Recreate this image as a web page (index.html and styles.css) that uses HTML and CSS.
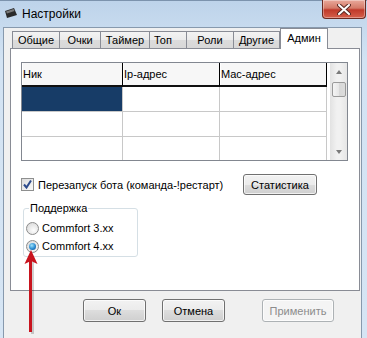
FILE: index.html
```html
<!DOCTYPE html>
<html lang="ru">

<head>
    <meta charset="UTF-8">
    <meta name="viewport" content="width=device-width, initial-scale=1.0">
    <title>Настройки</title>
    <link rel="stylesheet" href="styles.css">
</head>

<body>
    <div class="window">
        <div class="titlebar">
            <svg class="app-icon" width="14" height="11" viewBox="0 0 14 11">
                <polygon points="1,3 10,0 13,7 3,10" fill="#2a2a2a" />
                <polygon points="2,3.5 9.5,1 10.5,3 3,5.5" fill="#7a7a7a" />
            </svg>
            <span class="title">Настройки</span>
            <div class="close-btn">
                <svg width="14" height="11" viewBox="0 0 14 11">
                    <path d="M2 1 L12 10 M12 1 L2 10" stroke="#5a2a24" stroke-width="4" stroke-linecap="round" />
                    <path d="M2 1 L12 10 M12 1 L2 10" stroke="#fff" stroke-width="2" stroke-linecap="round" />
                </svg>
            </div>
        </div>

        <div class="client">
            <div class="tabs">
                <div class="tab tab-obshie">Общие</div>
                <div class="tab tab-ochki">Очки</div>
                <div class="tab tab-timer">Таймер</div>
                <div class="tab tab-top">Топ</div>
                <div class="tab tab-roli">Роли</div>
                <div class="tab tab-drugie">Другие</div>
                <div class="tab tab-admin active">Админ</div>
            </div>

            <div class="panel">
                <div class="grid">
                    <div class="grid-view">
                        <div class="gh">Ник</div>
                        <div class="gh">Ip-адрес</div>
                        <div class="gh">Mac-адрес</div>
                        <div class="gc selected"></div>
                        <div class="gc"></div>
                        <div class="gc"></div>
                        <div class="gc"></div>
                        <div class="gc"></div>
                        <div class="gc"></div>
                        <div class="gc"></div>
                        <div class="gc"></div>
                        <div class="gc"></div>
                    </div>
                    <div class="scrollbar">
                        <div class="sb-btn"><span class="arr-up"></span></div>
                        <div class="sb-thumb"></div>
                        <div class="sb-track"></div>
                        <div class="sb-btn"><span class="arr-down"></span></div>
                    </div>
                </div>

                <div class="check-row">
                    <label class="check">
                        <span class="checkbox">
                            <svg width="11" height="11" viewBox="0 0 11 11">
                                <path d="M2 5.5 L4.5 8.5 L9 1.5" fill="none" stroke="#2c4a8c" stroke-width="2" />
                            </svg>
                        </span>
                        Перезапуск бота (команда-!рестарт)
                    </label>
                    <button class="btn btn-stats">Статистика</button>
                </div>

                <div class="group">
                    <div class="group-title">Поддержка</div>
                    <div class="radio-row"><span class="radio"></span>Commfort 3.xx</div>
                    <div class="radio-row"><span class="radio checked"></span>Commfort 4.xx</div>
                </div>
            </div>

            <div class="btn-row">
                <button class="btn btn-ok">Ок</button>
                <button class="btn btn-cancel">Отмена</button>
                <button class="btn btn-apply" disabled>Применить</button>
            </div>
        </div>

        <!-- red pointer drawn over the dialog -->
        <svg class="arrow" width="367" height="338" viewBox="0 0 367 338">
            <line x1="32.5" y1="262" x2="32.5" y2="334" stroke="rgba(0,0,0,0.18)" stroke-width="3" />
            <line x1="30.5" y1="260" x2="30.5" y2="332" stroke="#c8141e" stroke-width="3" />
            <polygon points="31,250 24.5,264 31,261 37.5,264" fill="#c8141e" />
        </svg>
    </div>
</body>

</html>
```

FILE: styles.css
```css
* {
    box-sizing: border-box;
}

body {
    margin: 0;
    font-family: "Liberation Sans", Arial, sans-serif;
    font-size: 11px;
    font-weight: 400;
    color: #000;
}

.window {
    position: relative;
    width: 367px;
    height: 338px;
    overflow: hidden;
    display: flex;
    flex-direction: column;
    background: linear-gradient(#bdd3ea, #d3e3f3 60px, #d6e5f4);
}

/* title bar */

.titlebar {
    height: 27px;
    display: flex;
    align-items: flex-start;
    border-top: 1px solid #7c93ad;
}

.app-icon {
    margin: 7px 0 0 4px;
}

.title {
    margin: 6px 0 0 4px;
    font-size: 12px;
    line-height: 15px;
}

.close-btn {
    margin-left: auto;
    margin-right: 1px;
    margin-top: -1px;
    width: 44px;
    height: 19px;
    display: flex;
    align-items: center;
    justify-content: center;
    border: 1px solid #6b2a22;
    border-top: none;
    border-radius: 0 0 4px 4px;
    background: linear-gradient(#e9a99b, #d47a68 45%, #c0392a 55%, #d5604c);
    box-shadow: inset 0 0 0 1px rgba(255, 255, 255, 0.35);
}

/* client area */

.client {
    flex: 1;
    margin: 0 5px 0 3px;
    background: #f0f0f0;
    border: 1px solid #8799ad;
    border-bottom: none;
}

.tabs {
    display: flex;
    align-items: flex-end;
    height: 20px;
    padding-left: 8px;
}

.tab {
    height: 17px;
    line-height: 16px;
    text-align: center;
    border: 1px solid #898c95;
    border-bottom: none;
    margin-right: -1px;
    background: linear-gradient(#f3f3f3, #ebebeb 50%, #dcdcdc 50%, #d8d8d8);
}

.tab-obshie { width: 48px; }
.tab-ochki { width: 42px; }
.tab-timer { width: 50px; }
.tab-top { width: 38px; text-align: left; padding-left: 4px; }
.tab-roli { width: 48px; }
.tab-drugie { width: 47px; }

.tab.active {
    position: relative;
    z-index: 1;
    width: 48px;
    height: 21px;
    line-height: 19px;
    margin-bottom: -1px;
    margin-left: 1px;
    background: #fff;
}

.panel {
    width: 350px;
    height: 243px;
    margin-left: 6px;
    padding: 13px 0 0 10px;
    background: #fff;
    border: 1px solid #898c95;
}

/* grid */

.grid {
    width: 327px;
    height: 99px;
    display: flex;
    border: 1px solid #828790;
    background: #fff;
}

.grid-view {
    width: 308px;
    height: 97px;
    overflow: hidden;
    display: grid;
    grid-template-columns: 101px 97px 107px;
    grid-template-rows: 24px 25px 25px 25px;
    align-content: start;
}

.gh {
    padding-left: 1px;
    line-height: 22px;
    background: #f7f7f7;
    border-right: 1px solid #000;
    border-bottom: 2px solid #111;
    box-shadow: inset 1px 0 #fff;
}

.gc {
    border-right: 1px solid #c8c8c8;
    border-bottom: 1px solid #c8c8c8;
}

.gc.selected {
    background: #173c67;
}

.scrollbar {
    width: 17px;
    display: flex;
    flex-direction: column;
    background: linear-gradient(90deg, #e2e2e2, #f1f1f1 40%, #f1f1f1 60%, #e6e6e6);
}

.sb-btn {
    height: 17px;
    display: flex;
    align-items: center;
    justify-content: center;
}

.sb-track {
    flex: 1;
}

.arr-up,
.arr-down {
    width: 0;
    height: 0;
    border-left: 3.5px solid transparent;
    border-right: 3.5px solid transparent;
}

.arr-up {
    border-bottom: 4px solid #7a7a7a;
}

.arr-down {
    border-top: 4px solid #7a7a7a;
}

.sb-thumb {
    height: 15px;
    margin: 2px 1px 0 2px;
    border: 1px solid #9a9a9a;
    border-radius: 2px;
    background: linear-gradient(90deg, #f4f4f4, #e6e6e6 50%, #d8d8d8 50%, #dcdcdc);
}

/* checkbox row */

.check-row {
    display: flex;
    align-items: center;
    height: 21px;
    margin-top: 13px;
}

.check {
    width: 222px;
    display: flex;
    align-items: center;
    gap: 4px;
}

.checkbox {
    width: 13px;
    height: 13px;
    display: flex;
    align-items: center;
    justify-content: center;
    border: 1px solid #8e8f8f;
    background: linear-gradient(135deg, #dcdcdc, #fafafa);
}

.btn {
    font-family: inherit;
    font-size: 11px;
    font-weight: 400;
    color: #000;
    padding: 0;
    border: 1px solid #707070;
    border-radius: 3px;
    background: linear-gradient(#f2f2f2, #ebebeb 50%, #dddddd 50%, #cfcfcf);
    box-shadow: inset 0 0 0 1px rgba(255, 255, 255, 0.7);
}

.btn:disabled {
    color: #8c8c8c;
    border-color: #adb2b5;
    background: #f4f4f4;
}

.btn-stats {
    width: 74px;
    height: 21px;
}

/* group box */

.group {
    width: 115px;
    margin: 13px 0 0 2px;
    padding: 0 0 1px 1px;
    border: 1px solid #d5dfe5;
    border-radius: 3px;
}

.group-title {
    width: fit-content;
    margin: -7px 0 0 4px;
    padding: 0 1px;
    line-height: 13px;
    background: #fff;
}

.radio-row {
    height: 18px;
    display: flex;
    align-items: center;
    gap: 3px;
    padding-left: 1px;
}

.group-title + .radio-row {
    margin-top: 4px;
}

.radio {
    width: 13px;
    height: 13px;
    border-radius: 50%;
    border: 1px solid #8b8b8b;
    background: radial-gradient(circle at 60% 65%, #fdfdfd, #d4d4d4);
    display: flex;
    align-items: center;
    justify-content: center;
}

.radio.checked::after {
    content: "";
    width: 7px;
    height: 7px;
    border-radius: 50%;
    background: radial-gradient(circle at 40% 35%, #9ee3fb, #2a8ad0 55%, #0b3f7c);
}

/* bottom buttons */

.btn-row {
    display: flex;
    gap: 16px;
    margin-top: 8px;
    padding-left: 79px;
}

.btn-ok,
.btn-cancel {
    width: 63px;
    height: 23px;
}

.btn-apply {
    width: 72px;
    height: 23px;
    margin-left: 21px;
}

.arrow {
    position: absolute;
    left: 0;
    top: 0;
    pointer-events: none;
}
```
